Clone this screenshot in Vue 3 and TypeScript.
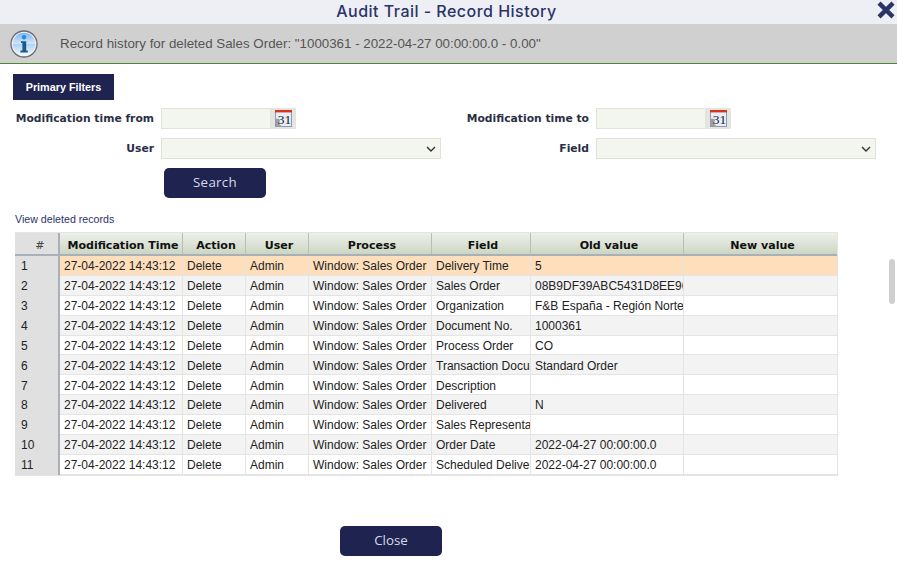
<script setup lang="ts">
interface Row { field: string; old: string }
const rows: Row[] = [
  { field: 'Delivery Time', old: '5' },
  { field: 'Sales Order', old: '08B9DF39ABC5431D8EE96A1B2C3D4E5F' },
  { field: 'Organization', old: 'F&B España - Región Norte' },
  { field: 'Document No.', old: '1000361' },
  { field: 'Process Order', old: 'CO' },
  { field: 'Transaction Document', old: 'Standard Order' },
  { field: 'Description', old: '' },
  { field: 'Delivered', old: 'N' },
  { field: 'Sales Representative', old: '' },
  { field: 'Order Date', old: '2022-04-27 00:00:00.0' },
  { field: 'Scheduled Delivery Date', old: '2022-04-27 00:00:00.0' },
]
const headers: string[] = ['Modification Time', 'Action', 'User', 'Process', 'Field', 'Old value', 'New value']
</script>

<template>
  <div class="page">
    <header class="title-bar">
      <h1 class="title">Audit Trail - Record History</h1>
      <svg class="close-x" viewBox="0 0 20 20" width="20" height="20" aria-label="Close">
        <path d="M3 3.2 L17 16.8 M17 3.2 L3 16.8" stroke="#2b3467" stroke-width="4.4" fill="none" />
      </svg>
    </header>

    <div class="info-bar">
      <svg class="info-icon" viewBox="0 0 28 28" width="28" height="28">
        <defs>
          <linearGradient id="infoFill" x1="0" y1="0" x2="0" y2="1">
            <stop offset="0" stop-color="#7fb6ee" />
            <stop offset="0.48" stop-color="#d3e6f9" />
            <stop offset="0.5" stop-color="#a9d2f6" />
            <stop offset="1" stop-color="#f2f8fe" />
          </linearGradient>
        </defs>
        <circle cx="14" cy="14" r="13" fill="#f4f4f4" stroke="#6a6c72" stroke-width="1.3" />
        <circle cx="14" cy="14" r="11.2" fill="url(#infoFill)" />
        <circle cx="14" cy="7.2" r="2.2" fill="#1f93ea" />
        <path d="M11 11.2 H16.2 V20.6 H17.8 V22.4 H10.4 V20.6 H12.4 V13 H11 Z" fill="#1c5a85" />
      </svg>
      <span class="info-text">Record history for deleted Sales Order: "1000361 - 2022-04-27 00:00:00.0 - 0.00"</span>
    </div>

    <main class="content">
      <div class="tab">Primary Filters</div>

      <div class="filters">
        <label class="flabel">Modification time from</label>
        <div class="date">
          <input class="date-input" type="text" />
          <span class="cal">
            <svg viewBox="0 0 17 17" width="17" height="17">
              <rect x="0.5" y="0.5" width="16" height="16" fill="#e6eef8" stroke="#8c9aab" />
              <rect x="0" y="0" width="17" height="2.4" fill="#d8341c" />
              <path d="M0 9 Q4 8 5 10 L4 14 Q6 15 7 17 H2 Q0 15 0 13 Z" fill="#9a9ea3" />
              <text x="9.4" y="14" text-anchor="middle" font-size="13.5" font-family="Liberation Serif" fill="#222">31</text>
            </svg>
          </span>
        </div>
        <label class="flabel">Modification time to</label>
        <div class="date">
          <input class="date-input" type="text" />
          <span class="cal">
            <svg viewBox="0 0 17 17" width="17" height="17">
              <rect x="0.5" y="0.5" width="16" height="16" fill="#e6eef8" stroke="#8c9aab" />
              <rect x="0" y="0" width="17" height="2.4" fill="#d8341c" />
              <path d="M0 9 Q4 8 5 10 L4 14 Q6 15 7 17 H2 Q0 15 0 13 Z" fill="#9a9ea3" />
              <text x="9.4" y="14" text-anchor="middle" font-size="13.5" font-family="Liberation Serif" fill="#222">31</text>
            </svg>
          </span>
        </div>
        <label class="flabel">User</label>
        <div class="sel">
          <svg class="chev" viewBox="0 0 10 6" width="10" height="6"><path d="M1 1 L5 5 L9 1" fill="none" stroke="#333" stroke-width="1.4" /></svg>
        </div>
        <label class="flabel">Field</label>
        <div class="sel">
          <svg class="chev" viewBox="0 0 10 6" width="10" height="6"><path d="M1 1 L5 5 L9 1" fill="none" stroke="#333" stroke-width="1.4" /></svg>
        </div>
      </div>

      <button class="btn search" type="button">Search</button>

      <a class="link">View deleted records</a>

      <div class="grid">
        <div class="row head">
          <div class="cell num">#</div>
          <div v-for="h in headers" :key="h" class="cell">{{ h }}</div>
        </div>
        <div v-for="(r, i) in rows" :key="i" class="row body" :class="{ sel1: i === 0, alt: i % 2 === 1 }">
          <div class="cell num">{{ i + 1 }}</div>
          <div class="cell">27-04-2022 14:43:12</div>
          <div class="cell">Delete</div>
          <div class="cell">Admin</div>
          <div class="cell">Window: Sales Order</div>
          <div class="cell">{{ r.field }}</div>
          <div class="cell">{{ r.old }}</div>
          <div class="cell last"></div>
        </div>
      </div>

      <div class="foot">
        <button class="btn" type="button">Close</button>
      </div>
    </main>

    <div class="scroll-thumb"></div>
  </div>
</template>

<style scoped>
.page {
  position: relative;
  width: 897px;
  height: 573px;
  overflow: hidden;
  background: #fff;
  font-family: "Liberation Sans", Arial, sans-serif;
}
.title-bar {
  position: relative;
  height: 24px;
  background: #eeeff5;
  display: flex;
  align-items: center;
  justify-content: center;
}
.title {
  margin: -2px 0 0 -4px;
  font: 500 16px/24px "Inter", sans-serif;
  letter-spacing: 0.48px;
  color: #2b3467;
}
.close-x {
  position: absolute;
  right: 1px;
  top: 0;
}
.info-bar {
  height: 39px;
  background: #d0d0d0;
  border-bottom: 1px solid #4a8a2a;
  display: flex;
  align-items: center;
  padding-left: 10px;
}
.info-icon { flex: none; }
.info-text {
  margin-left: 22px;
  font-size: 13.33px;
  color: #555;
}
.content {
  padding: 10px 0 0 13px;
}
.tab {
  width: 101px;
  height: 26px;
  background: #1f2350;
  color: #fff;
  font: 700 10.8px/27px "Liberation Sans", sans-serif;
  text-align: center;
}
.filters {
  display: grid;
  grid-template-columns: 141px 280px 141px 280px;
  grid-auto-rows: 21px;
  column-gap: 7px;
  row-gap: 9px;
  margin-top: 8px;
}
.flabel {
  font: 700 10.75px/21px "DejaVu Sans", sans-serif;
  color: #2a2f45;
  text-align: right;
  white-space: nowrap;
}
.date {
  display: flex;
  width: 135px;
  height: 21px;
}
.date-input {
  box-sizing: border-box;
  width: 110px;
  height: 21px;
  margin: 0;
  padding: 0;
  background: #f3f5ef;
  border: 1px solid #e2e2de;
  outline: none;
}
.cal {
  width: 25px;
  height: 21px;
  background: #e4e4e0;
  display: flex;
  align-items: center;
  justify-content: center;
}
.sel {
  position: relative;
  box-sizing: border-box;
  height: 21px;
  background: #f3f5ef;
  border: 1px solid #e0e0dc;
}
.chev {
  position: absolute;
  right: 4px;
  top: 7px;
}
.btn {
  display: block;
  box-sizing: border-box;
  width: 102px;
  height: 30px;
  margin: 0;
  padding: 0;
  border: none;
  border-radius: 5px;
  background: #1f2350;
  color: #d8dae8;
  font: 400 13.33px/29px "Open Sans", sans-serif;
}
.search {
  margin: 9px 0 0 151px;
  padding-bottom: 2px;
  letter-spacing: 0.3px;
}
.link {
  display: block;
  margin-top: 14px;
  margin-left: 2px;
  font-size: 10.67px;
  line-height: 14px;
  color: #2b3467;
}
.grid {
  width: 822px;
  margin: 6px 0 0 2px;
  background: #e4e4e4;
  padding: 1px 1px 1px 0;
}
.row {
  display: grid;
  grid-template-columns: 45px 123px 63px 63px 123px 99px 153px 153px;
  width: 822px;
}
.cell {
  overflow: hidden;
  white-space: nowrap;
  box-sizing: border-box;
  padding-left: 4px;
  border-right: 1px solid #e4e4e4;
}
.cell.last { border-right: 0; }
.head {
  height: 23px;
  background: linear-gradient(#eef0ea, #ccd6c3);
  border-bottom: 2px solid #a9b0b8;
  box-sizing: border-box;
}
.head .cell {
  padding: 0 0 0 4px;
  text-align: center;
  font: 700 11.05px/25px "DejaVu Sans", sans-serif;
  color: #111;
  border-right: 1px solid #b8c0b0;
}
.head .cell:last-child { border-right: 0; }
.head .num {
  background: #e0e0e0;
  color: #444;
  font-weight: 400;
  padding-left: 7px;
  border-right: 2px solid #a9b0b8;
}
.body {
  height: 19.9px;
  background: #fff;
  box-shadow: inset 0 -1px 0 #e4e4e4;
  font-size: 12px;
  line-height: 20px;
  color: #222;
}
.body .cell { padding-top: 0.25px; }
.body.alt { background: #f3f3f3; }
.body.sel1 { background: #ffdfbb; }
.body .num {
  background: #e0e0e0;
  padding-left: 6px;
  border-right: 2px solid #a9b0b8;
}
.foot {
  display: flex;
  margin-top: 50px;
  padding-left: 327px;
}
.scroll-thumb {
  position: absolute;
  left: 889px;
  top: 259px;
  width: 6px;
  height: 45px;
  border-radius: 3px;
  background: #cfcfcf;
}
</style>
